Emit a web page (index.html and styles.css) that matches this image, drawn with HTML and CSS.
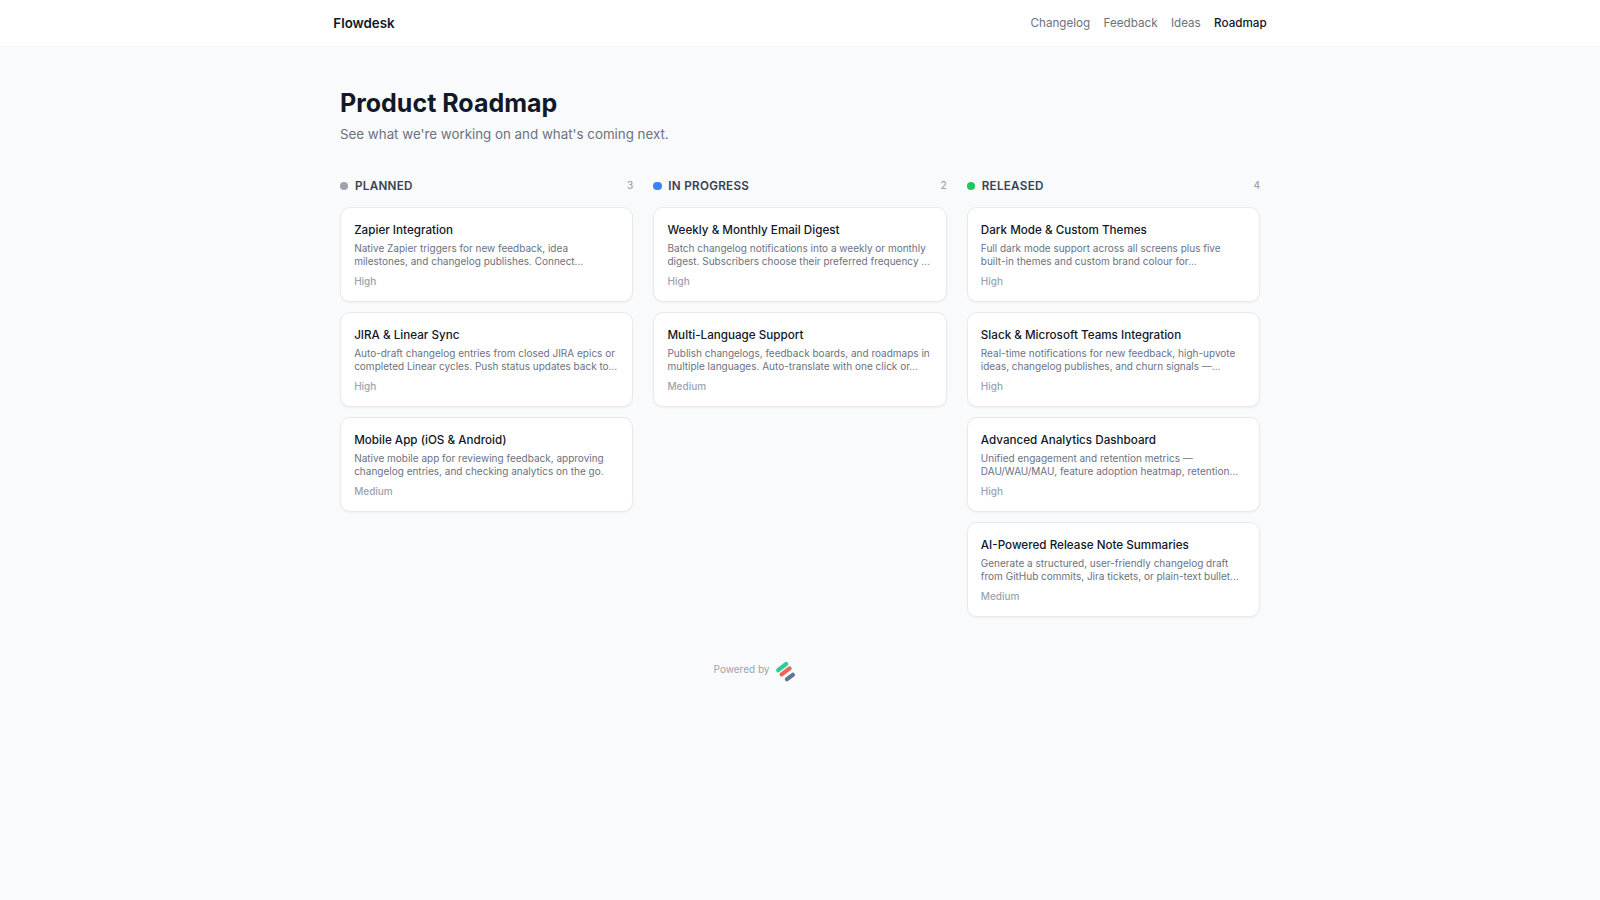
FILE: index.html
```html
<!DOCTYPE html>
<html lang="en">
<head>
    <meta charset="UTF-8">
    <meta name="viewport" content="width=device-width, initial-scale=1">
    <title>Product Roadmap - Flowdesk</title>
    <link rel="stylesheet" href="styles.css">
</head>
<body>
    <header class="header">
        <div class="header-inner">
            <a class="brand" href="#">Flowdesk</a>
            <nav class="nav">
                <a href="#">Changelog</a>
                <a href="#">Feedback</a>
                <a href="#">Ideas</a>
                <a class="active" href="#">Roadmap</a>
            </nav>
        </div>
    </header>

    <main class="main">
        <h1>Product Roadmap</h1>
        <p class="subtitle">See what we're working on and what's coming next.</p>

        <div class="board">
            <section class="column">
                <div class="column-head">
                    <span class="dot planned"></span>
                    <h2>Planned</h2>
                    <span class="count">3</span>
                </div>
                <article class="card">
                    <h3>Zapier Integration</h3>
                    <p>Native Zapier triggers for new feedback, idea<br>milestones, and changelog publishes. Connect…</p>
                    <span class="priority">High</span>
                </article>
                <article class="card">
                    <h3>JIRA &amp; Linear Sync</h3>
                    <p>Auto-draft changelog entries from closed JIRA epics or<br>completed Linear cycles. Push status updates back to…</p>
                    <span class="priority">High</span>
                </article>
                <article class="card">
                    <h3>Mobile App (iOS &amp; Android)</h3>
                    <p>Native mobile app for reviewing feedback, approving<br>changelog entries, and checking analytics on the go.</p>
                    <span class="priority">Medium</span>
                </article>
            </section>

            <section class="column">
                <div class="column-head">
                    <span class="dot progress"></span>
                    <h2>In Progress</h2>
                    <span class="count">2</span>
                </div>
                <article class="card">
                    <h3>Weekly &amp; Monthly Email Digest</h3>
                    <p>Batch changelog notifications into a weekly or monthly<br>digest. Subscribers choose their preferred frequency …</p>
                    <span class="priority">High</span>
                </article>
                <article class="card">
                    <h3>Multi-Language Support</h3>
                    <p>Publish changelogs, feedback boards, and roadmaps in<br>multiple languages. Auto-translate with one click or…</p>
                    <span class="priority">Medium</span>
                </article>
            </section>

            <section class="column">
                <div class="column-head">
                    <span class="dot released"></span>
                    <h2>Released</h2>
                    <span class="count">4</span>
                </div>
                <article class="card">
                    <h3>Dark Mode &amp; Custom Themes</h3>
                    <p>Full dark mode support across all screens plus five<br>built-in themes and custom brand colour for…</p>
                    <span class="priority">High</span>
                </article>
                <article class="card">
                    <h3>Slack &amp; Microsoft Teams Integration</h3>
                    <p>Real-time notifications for new feedback, high-upvote<br>ideas, changelog publishes, and churn signals —…</p>
                    <span class="priority">High</span>
                </article>
                <article class="card">
                    <h3>Advanced Analytics Dashboard</h3>
                    <p>Unified engagement and retention metrics —<br>DAU/WAU/MAU, feature adoption heatmap, retention…</p>
                    <span class="priority">High</span>
                </article>
                <article class="card">
                    <h3>AI-Powered Release Note Summaries</h3>
                    <p>Generate a structured, user-friendly changelog draft<br>from GitHub commits, Jira tickets, or plain-text bullet…</p>
                    <span class="priority">Medium</span>
                </article>
            </section>
        </div>
    </main>

    <footer class="footer">
        <span>Powered by</span>
        <svg class="logo" width="111" height="22" viewBox="0 0 111 22" fill="none" stroke-width="4.2" stroke-linecap="round">
            <path d="M3.2 10.2L11.2 4" stroke="#2dcc9a"/>
            <path d="M6.7 14.4L14.6 8.4" stroke="#ee6352"/>
            <path d="M12 19.2L17.8 14.8" stroke="#64748f"/>
        </svg>
    </footer>
</body>
</html>
```
FILE: styles.css
```css
* {
    box-sizing: border-box;
}

body {
    margin: 0;
    font-family: Inter, 'Liberation Sans', sans-serif;
    background-color: #f9fafb;
    color: #111827;
}

a {
    color: inherit;
    text-decoration: none;
}

h1, h2, h3, p {
    margin: 0;
}

.header {
    background-color: white;
    border-bottom: 1px solid #f3f4f6;
}

.header-inner {
    display: flex;
    align-items: center;
    justify-content: space-between;
    width: 933.33px;
    height: 46.4px;
    margin: 0 auto;
}

.brand {
    font-size: 13.33px;
    line-height: 20px;
    font-weight: 600;
}

.nav {
    display: flex;
    gap: 13.33px;
    padding-top: 1px;
    font-size: 11.67px;
    line-height: 17px;
    color: #6b7280;
}

.nav .active {
    font-weight: 500;
    color: #111827;
}

.main {
    width: 920px;
    margin: 0 auto;
    padding-top: 40.6px;
}

h1 {
    font-size: 25px;
    line-height: 30px;
    font-weight: 700;
}

.subtitle {
    margin-top: 6.4px;
    font-size: 13.33px;
    line-height: 20px;
    color: #6b7280;
}

.board {
    display: grid;
    grid-template-columns: repeat(3, 1fr);
    gap: 20px;
    align-items: start;
    margin-top: 33px;
}

.column {
    display: flex;
    flex-direction: column;
    gap: 10px;
}

.column-head {
    display: flex;
    align-items: center;
    gap: 6.67px;
    height: 16.67px;
    margin-bottom: 3.33px;
}

.dot {
    width: 8.33px;
    height: 8.33px;
    border-radius: 50%;
}

.planned {
    background-color: #9ca3af;
}

.progress {
    background-color: #3b82f6;
}

.released {
    background-color: #22c55e;
}

h2 {
    padding-top: 1px;
    font-size: 11.67px;
    line-height: 16.67px;
    font-weight: 600;
    letter-spacing: 0.025em;
    text-transform: uppercase;
    color: #374151;
}

.count {
    margin-left: auto;
    font-size: 10px;
    line-height: 13.33px;
    font-weight: 500;
    color: #9ca3af;
}

.card {
    height: 95px;
    padding: 13.17px;
    background-color: white;
    border: 1px solid #e8eaed;
    border-radius: 10px;
    box-shadow: 0 1px 2px rgba(0, 0, 0, 0.05);
}

h3 {
    font-size: 11.67px;
    line-height: 16.67px;
    font-weight: 500;
}

.card p {
    margin-top: 3.33px;
    font-size: 10px;
    line-height: 13.33px;
    white-space: nowrap;
    color: #6b7280;
}

.priority {
    display: block;
    margin-top: 6.67px;
    font-size: 10px;
    line-height: 13.33px;
    font-weight: 500;
    color: #9ca3af;
}

.footer {
    display: flex;
    align-items: flex-start;
    justify-content: center;
    gap: 6px;
    margin-top: 43px;
    font-size: 10px;
    line-height: 19px;
    color: #9ca3af;
}

.logo {
    display: block;
}
```
